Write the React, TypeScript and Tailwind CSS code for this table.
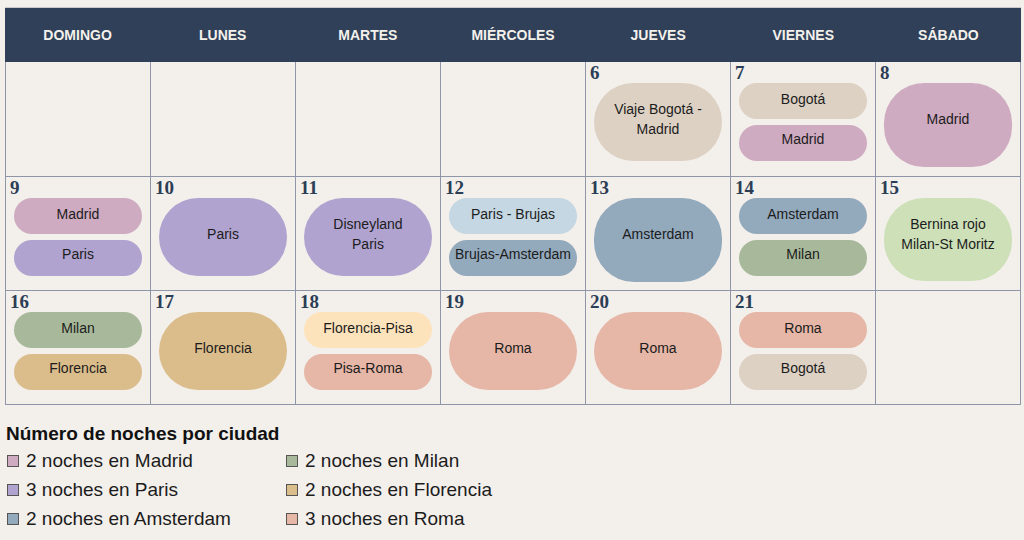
import React from 'react';

type Pill = { label: string; bg: string; h?: string };
type Day = { n?: number; pills: Pill[] };

const C = {
  madrid: 'bg-[#cfabc1]',
  paris: 'bg-[#b0a3cf]',
  bogota: 'bg-[#ddd1c3]',
  brujas: 'bg-[#c4d7e2]',
  ams: 'bg-[#93a9bc]',
  milan: 'bg-[#a8b99b]',
  flor: 'bg-[#dbbd8b]',
  pisa: 'bg-[#fde3bb]',
  roma: 'bg-[#e6b6a7]',
  bernina: 'bg-[#cde0b8]',
};

// tall pills: text sits a little above centre in the reference
const tall = 'h-[78px] pb-[6px]';
const taller = 'h-[84px] pb-[12px]';

const days = ['DOMINGO', 'LUNES', 'MARTES', 'MIÉRCOLES', 'JUEVES', 'VIERNES', 'SÁBADO'];

const weeks: Day[][] = [
  [
    { pills: [] },
    { pills: [] },
    { pills: [] },
    { pills: [] },
    { n: 6, pills: [{ label: 'Viaje Bogotá -\nMadrid', bg: C.bogota, h: tall }] },
    { n: 7, pills: [{ label: 'Bogotá', bg: C.bogota }, { label: 'Madrid', bg: C.madrid }] },
    { n: 8, pills: [{ label: 'Madrid', bg: C.madrid, h: taller }] },
  ],
  [
    { n: 9, pills: [{ label: 'Madrid', bg: C.madrid }, { label: 'Paris', bg: C.paris }] },
    { n: 10, pills: [{ label: 'Paris', bg: C.paris, h: tall }] },
    { n: 11, pills: [{ label: 'Disneyland\nParis', bg: C.paris, h: tall }] },
    { n: 12, pills: [{ label: 'Paris - Brujas', bg: C.brujas }, { label: 'Brujas-Amsterdam', bg: C.ams }] },
    { n: 13, pills: [{ label: 'Amsterdam', bg: C.ams, h: taller }] },
    { n: 14, pills: [{ label: 'Amsterdam', bg: C.ams }, { label: 'Milan', bg: C.milan }] },
    { n: 15, pills: [{ label: 'Bernina rojo\nMilan-St Moritz', bg: C.bernina, h: 'h-[83px] pb-[11px]' }] },
  ],
  [
    { n: 16, pills: [{ label: 'Milan', bg: C.milan }, { label: 'Florencia', bg: C.flor }] },
    { n: 17, pills: [{ label: 'Florencia', bg: C.flor, h: tall }] },
    { n: 18, pills: [{ label: 'Florencia-Pisa', bg: C.pisa }, { label: 'Pisa-Roma', bg: C.roma }] },
    { n: 19, pills: [{ label: 'Roma', bg: C.roma, h: tall }] },
    { n: 20, pills: [{ label: 'Roma', bg: C.roma, h: tall }] },
    { n: 21, pills: [{ label: 'Roma', bg: C.roma }, { label: 'Bogotá', bg: C.bogota }] },
    { pills: [] },
  ],
];

const legend: [string, string][] = [
  ['2 noches en Madrid', C.madrid],
  ['2 noches en Milan', C.milan],
  ['3 noches en Paris', C.paris],
  ['2 noches en Florencia', C.flor],
  ['2 noches en Amsterdam', C.ams],
  ['3 noches en Roma', C.roma],
];

function DayCell({ d }: { d: Day }) {
  const single = d.pills.length === 1;
  return (
    <div className="flex flex-col border-r border-b border-[#8e96a7] px-2">
      <div className="-ml-1 h-[21px] pt-[1px] text-[19px] leading-[20px] font-black text-[#2c3d56] [font-family:'Liberation_Serif',serif]">
        {d.n ?? ''}
      </div>
      <div className={`flex flex-col ${single ? '' : 'gap-[6px]'}`}>
        {d.pills.map((p, i) => (
          <div
            key={i}
            className={`flex items-center justify-center px-1 text-center text-[14px] leading-[20px] whitespace-pre-line text-[#1c1c1c] ${p.bg} ${p.h ?? (i === 0 ? 'h-[36px] pb-[5px]' : 'h-[36px] pb-[9px]')} ${single ? 'rounded-[40px]' : 'rounded-[18px]'}`}
          >
            {p.label}
          </div>
        ))}
      </div>
    </div>
  );
}

export default function App() {
  return (
    <div className="h-[540px] w-[1024px] overflow-hidden bg-[#f3efeb] pt-[7px] [font-family:'Liberation_Sans',Arial,sans-serif]">
      <div className="ml-[5px] w-[1016px] border-t border-[#c9c9cc]">
        <div className="grid h-[54px] grid-cols-7 bg-[#2f4058]">
          {days.map((d) => (
            <div key={d} className="flex items-center justify-center text-[14px] font-bold text-[#f4f1ec]">
              {d}
            </div>
          ))}
        </div>
        <div className="grid grid-cols-7 border-l border-[#8e96a7] [grid-template-rows:115px_114px_114px]">
          {weeks.flat().map((d, i) => (
            <DayCell key={i} d={d} />
          ))}
        </div>
      </div>
      <div className="ml-[6px] mt-[18px]">
        <div className="text-[19px] leading-[22px] font-bold text-[#111]">Número de noches por ciudad</div>
        <div className="mt-[5px] grid w-[520px] grid-cols-[279px_1fr] gap-y-[7px]">
          {legend.map(([t, bg]) => (
            <div key={t} className="flex items-center gap-[7px] text-[19px] leading-[22px] text-[#1c1c1c]">
              <span className="flex h-[22px] items-center pl-[1px]">
                <span className={`h-[12px] w-[12px] border border-[#555] ${bg}`} />
              </span>
              {t}
            </div>
          ))}
        </div>
      </div>
    </div>
  );
}
